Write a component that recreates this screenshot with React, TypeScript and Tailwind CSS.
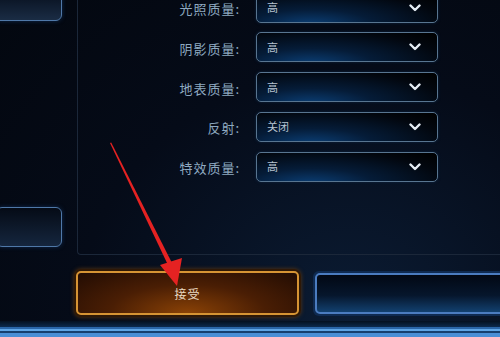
import React from 'react';

const rows = [
  { label: '光照质量:', value: '高' },
  { label: '阴影质量:', value: '高' },
  { label: '地表质量:', value: '高' },
  { label: '反射:', value: '关闭' },
  { label: '特效质量:', value: '高' },
];

function Chevron() {
  return (
    <svg width="12" height="8" viewBox="0 0 12 8" className="shrink-0">
      <polyline points="1.5,1.5 6,6 10.5,1.5" fill="none" stroke="#e6eef6" strokeWidth="2.4" strokeLinecap="round" strokeLinejoin="round" />
    </svg>
  );
}

export default function App() {
  return (
    <div
      className="relative w-[500px] h-[337px] overflow-hidden bg-[radial-gradient(ellipse_at_70%_95%,#0b1c34_0%,#050b18_55%,#03070f_100%)] flex flex-col"
      style={{ fontFamily: '"Noto Sans CJK SC", "Noto Sans", sans-serif' }}
    >
      {/* Top area */}
      <div className="flex h-[255px] shrink-0">
        {/* Left column */}
        <div className="w-[62px] flex flex-col justify-between pb-[8px]">
          <div className="h-[25px] -mt-[4px] -ml-[4px] border-[1.5px] border-[#4f78a8] rounded-br-[6px] rounded-bl-[4px] bg-[linear-gradient(180deg,#0a1424,#1a2c44)] shadow-[0_0_4px_#0f2a50]" />
          <div className="h-[40px] -ml-[4px] border-[1.5px] border-[#4f78a8] rounded-[6px] bg-[linear-gradient(180deg,#050b16,#15263e)] shadow-[0_0_4px_#0f2a50]" />
        </div>

        {/* Settings panel */}
        <div className="ml-[15px] flex-1 border-l border-b border-[#1b2739] rounded-bl-[4px] -mr-[10px]">
          <div className="flex flex-col gap-[9.75px] -mt-[7.5px]">
            {rows.map((r) => (
              <div key={r.label} className="flex items-center">
                <div className="w-[163px] pr-[1px] pt-[2px] text-right text-[13px] leading-none text-[#8ea9c0] tracking-[1px]">
                  {r.label}
                </div>
                <div className="ml-[15px] w-[182px] h-[30px] border-[1.5px] border-[#587590] rounded-[5px] bg-[radial-gradient(ellipse_at_30%_110%,#0b3f76_0%,#051c38_35%,#02070f_75%,#000_100%)] flex items-center justify-between pl-[10px] pr-[16px] shadow-[0_0_3px_#0c2440]">
                  <span className="text-[11px] leading-none text-[#b7c4d2]">{r.value}</span>
                  <Chevron />
                </div>
              </div>
            ))}
          </div>
        </div>
      </div>

      {/* Buttons */}
      <div className="flex mt-[14px] ml-[74px] -mr-[20px] gap-[12px] items-center">
        <div className="w-[227px] h-[48px] rounded-[7px] p-[2px] bg-[#2e1806] shadow-[0_0_4px_#5a3510]">
          <div className="w-full h-full rounded-[5px] border-2 border-[#d69434] bg-[radial-gradient(ellipse_at_50%_100%,#8a4206_0%,#4a1e04_50%,#220c03_100%)] flex items-center justify-center pt-[2px]">
            <span className="text-[12px] leading-none text-[#eadbc4] tracking-[1px]">接受</span>
          </div>
        </div>
        <div className="flex-1 h-[45px] rounded-[6px] p-[2px] bg-[#0f2a50]">
          <div className="w-full h-full rounded-[5px] border-2 border-[#4b7cc0] bg-[linear-gradient(180deg,#020814_0%,#06162c_55%,#12406f_100%)]" />
        </div>
      </div>

      {/* Bottom stripes */}
      <div className="mt-auto flex flex-col">
        <div className="h-[6px] bg-[linear-gradient(180deg,#04101f,#0c2a4d)]" />
        <div className="h-[2px] bg-[#2a66a8]" />
        <div className="h-[2px] bg-[#5fa6e6]" />
        <div className="h-[2px] bg-[#16406f]" />
        <div className="h-[4px] bg-[#4a8fd6]" />
      </div>

      {/* Red arrow overlay */}
      <svg className="absolute left-0 top-0 pointer-events-none" width="500" height="337" viewBox="0 0 500 337">
        <polygon points="110,143 111.2,142.6 171.5,262 167.5,264" fill="#e52222" />
        <polygon points="177,286 160,265 182,258" fill="#e52222" />
      </svg>
    </div>
  );
}
